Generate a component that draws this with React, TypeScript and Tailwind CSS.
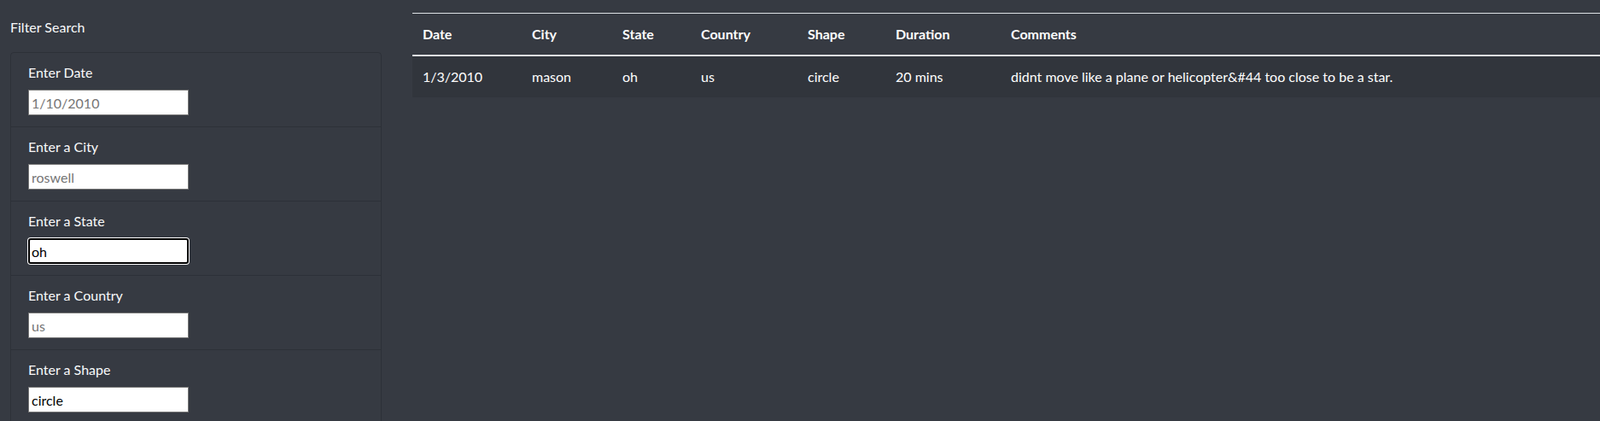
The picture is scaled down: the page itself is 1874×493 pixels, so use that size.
import React from "react";

type Filter = {
  label: string;
  value?: string;
  placeholder?: string;
  focused?: boolean;
};

const filters: Filter[] = [
  { label: "Enter Date", placeholder: "1/10/2010" },
  { label: "Enter a City", placeholder: "roswell" },
  { label: "Enter a State", value: "oh", focused: true },
  { label: "Enter a Country", placeholder: "us" },
  { label: "Enter a Shape", value: "circle" },
];

const columns = [
  { name: "Date", width: "w-[128px]" },
  { name: "City", width: "w-[106px]" },
  { name: "State", width: "w-[92px]" },
  { name: "Country", width: "w-[125px]" },
  { name: "Shape", width: "w-[103px]" },
  { name: "Duration", width: "w-[135px]" },
  { name: "Comments", width: "" },
];

const rows = [
  [
    "1/3/2010",
    "mason",
    "oh",
    "us",
    "circle",
    "20 mins",
    "didnt move like a plane or helicopter&#44 too close to be a star.",
  ],
];

export default function App() {
  return (
    <div className="min-h-screen bg-[#363a42] text-[#f8f9fa] font-['Lato','Segoe_UI',sans-serif] text-[16px] leading-6 flex overflow-hidden">
      {/* Filter sidebar */}
      <aside className="w-[447px] shrink-0 pl-3 pt-5">
        <h5 className="mb-[17px]">Filter Search</h5>
        <ul className="border border-black/15 rounded-[4px]">
          {filters.map((f, i) => (
            <li
              key={f.label}
              className={i > 0 ? "px-5 pt-[11px] pb-[13px] border-t border-black/15" : "px-5 pt-[11px] pb-[13px]"}
            >
              <label className="block mb-2">{f.label}</label>
              <input
                readOnly
                defaultValue={f.value}
                placeholder={f.placeholder}
                className={
                  f.focused
                    ? "block w-[188px] h-[30px] bg-white text-black px-[2px] border-2 border-black rounded-[3px] shadow-[0_0_0_1px_#ffffff] outline-none placeholder:text-[#757575]"
                    : "block w-[188px] h-[30px] bg-white text-black px-[3px] border border-[#767676] outline-none placeholder:text-[#757575]"
                }
              />
            </li>
          ))}
        </ul>
      </aside>

      {/* Results table */}
      <main className="flex-1 ml-9 mt-[15px]">
        <table className="w-full table-fixed border-collapse text-white">
          <thead>
            <tr>
              {columns.map((c) => (
                <th
                  key={c.name}
                  className={`${c.width} text-left font-bold px-3 py-3 border-t border-[#dee2e6] border-b-2`}
                >
                  {c.name}
                </th>
              ))}
            </tr>
          </thead>
          <tbody>
            {rows.map((r, i) => (
              <tr key={i} className="bg-[#31353c]">
                {r.map((cell, j) => (
                  <td key={j} className="px-3 py-3 whitespace-nowrap">
                    {cell}
                  </td>
                ))}
              </tr>
            ))}
          </tbody>
        </table>
      </main>
    </div>
  );
}
